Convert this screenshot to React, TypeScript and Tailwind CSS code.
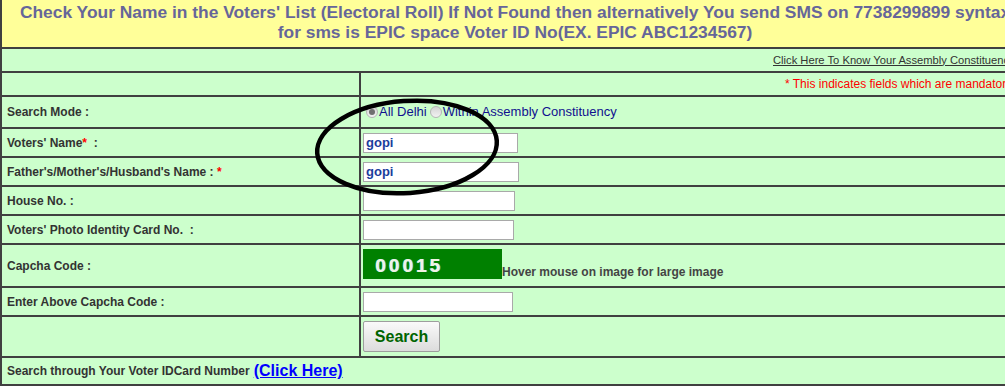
import React from 'react'

const font = { fontFamily: '"Liberation Sans", Arial, sans-serif' }

function Label({ children }: { children: React.ReactNode }) {
  return <span className="text-[12px] font-bold text-[#333333]">{children}</span>
}

function Star() {
  return <span className="text-[#ff0000]">*</span>
}

function TextBox({ value = '', width }: { value?: string; width: string }) {
  return (
    <div className={`${width} h-[20px] bg-white border border-[#a9a9a9] flex items-center px-[2px]`}>
      <span className="text-[13px] font-bold text-[#1a3d9c]">{value}</span>
    </div>
  )
}

function Radio({ checked }: { checked?: boolean }) {
  return (
    <span className="inline-flex w-[12px] h-[12px] rounded-full bg-gradient-to-b from-[#d4d4d4] to-[#f2f2f2] border border-[#b5b5b5] items-center justify-center">
      {checked && <span className="w-[6px] h-[6px] rounded-full bg-[#6f6f6f]" />}
    </span>
  )
}

function Row({ h, left, children, align = 'items-center' }: { h: string; left: React.ReactNode; children?: React.ReactNode; align?: string }) {
  return (
    <div className={`grid grid-cols-[359px_1fr] ${h} border-b-2 border-[#404040]`}>
      <div className="border-r-2 border-[#404040] flex items-center pl-[5px]">{left}</div>
      <div className={`flex ${align} pl-[2px]`}>{children}</div>
    </div>
  )
}

export default function App() {
  return (
    <div className="w-[1005px] h-[386px] overflow-hidden bg-white" style={font}>
      <div className="relative w-[1028px] border-l-2 border-[#404040] bg-[#ccffcc]">
        {/* heading */}
        <div className="h-[49px] bg-[#ffff99] border-b-2 border-[#404040] flex items-start justify-center pt-[2px]">
          <p className="text-center text-[17.4px] leading-[20px] font-bold text-[#666699] whitespace-nowrap">
            Check Your Name in the Voters' List (Electoral Roll) If Not Found then alternatively You send SMS on 7738299899 syntax
            <br />
            for sms is EPIC space Voter ID No(EX. EPIC ABC1234567)
          </p>
        </div>

        <div className="h-[24px] border-b-2 border-[#404040] flex items-center pl-[771px]">
          <a className="text-[11.2px] text-[#333333] underline whitespace-nowrap">Click Here To Know Your Assembly Constituency</a>
        </div>

        <div className="grid grid-cols-[359px_1fr] h-[24px] border-b-2 border-[#404040]">
          <div className="border-r-2 border-[#404040]" />
          <div className="flex items-center pl-[424px]">
            <span className="text-[12px] text-[#ff0000] whitespace-nowrap">* This indicates fields which are mandatory</span>
          </div>
        </div>

        <Row h="h-[32px]" left={<Label>Search Mode :</Label>}>
          <div className="flex items-center text-[13px] text-[#10108f] pl-[3px] whitespace-nowrap">
            <Radio checked />
            <span className="ml-[1px]">All Delhi</span>
            <span className="ml-[3px]" />
            <Radio />
            <span className="ml-[1px]">Within Assembly Constituency</span>
          </div>
        </Row>

        <Row h="h-[29px]" left={<Label>Voters' Name<Star />&nbsp; :</Label>}>
          <TextBox value="gopi" width="w-[155px]" />
        </Row>

        <Row h="h-[29px]" left={<Label>Father's/Mother's/Husband's Name : <Star /></Label>}>
          <TextBox value="gopi" width="w-[156px]" />
        </Row>

        <Row h="h-[29px]" left={<Label>House No. :</Label>}>
          <TextBox width="w-[152px]" />
        </Row>

        <Row h="h-[29px]" left={<Label>Voters' Photo Identity Card No. &nbsp;:</Label>}>
          <TextBox width="w-[151px]" />
        </Row>

        <Row h="h-[43px]" left={<Label>Capcha Code :</Label>} align="items-end pb-[7px]">
          <div className="w-[139px] h-[30px] bg-[#008000] flex items-start pt-[3px] pl-[12px]">
            <span className="text-[19px] font-bold tracking-[3px] text-[#f4f4e0]" style={{ textShadow: '1px 0 0 #7ad0ff' }}>00015</span>
          </div>
          <span className="text-[12px] font-bold text-[#444444] leading-[14px] whitespace-nowrap">Hover mouse on image for large image</span>
        </Row>

        <Row h="h-[29px]" left={<Label>Enter Above Capcha Code :</Label>}>
          <TextBox width="w-[150px]" />
        </Row>

        <Row h="h-[41px]" left={null}>
          <button className="w-[77px] h-[31px] border border-[#9e9e9e] rounded-[2px] bg-gradient-to-b from-[#fafafa] to-[#dcdcdc] text-[16px] font-bold text-[#006400]">
            Search
          </button>
        </Row>

        <div className="h-[28px] border-b-2 border-[#404040] flex items-center pl-[5px]">
          <Label>Search through Your Voter IDCard Number</Label>
          <a className="ml-[4px] text-[16px] font-bold text-[#0000ff] underline">(Click Here)</a>
        </div>
        <div className="h-[20px]" />

        {/* hand-drawn ellipse over the name fields */}
        <svg className="absolute left-[300px] top-[90px] pointer-events-none" width="220" height="115" viewBox="0 0 220 115">
          <ellipse cx="105" cy="57" rx="90" ry="46" transform="rotate(-4 105 57)" fill="none" stroke="#000" strokeWidth="4.5" />
        </svg>
      </div>
    </div>
  )
}
